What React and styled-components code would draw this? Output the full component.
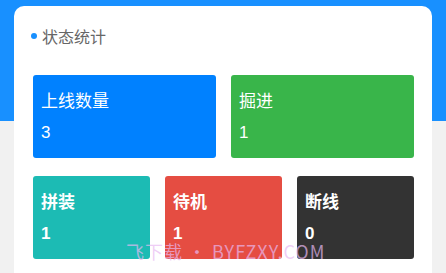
import React from "react"
import styled, { createGlobalStyle } from "styled-components"

const GlobalStyle = createGlobalStyle`
  body {
    margin: 0;
    background: #f1f1f1;
    font-family: "Microsoft YaHei", "Noto Sans CJK SC", "Liberation Sans", sans-serif;
  }
`
const Page = styled.div`
  position: relative;
  height: 273px;
  overflow: hidden;
  padding-top: 6px;
  box-sizing: border-box;
  background: linear-gradient(#1890ff 0, #1890ff 121px, #f1f1f1 121px);
`
const Panel = styled.div`
  margin: 0 14px;
  background: #fff;
  border-radius: 10px 10px 0 0;
  padding: 18px 18px 30px 19px;
  min-height: 300px;
`
const Title = styled.div`
  display: flex;
  align-items: center;
  gap: 5px;
  height: 24px;
  font-size: 16px;
  color: #666;
`
const Dot = styled.span`
  width: 6px;
  height: 6px;
  border-radius: 50%;
  background: #1890ff;
  margin-left: -2px;
`
const Grid = styled.div`
  display: grid;
  grid-template-columns: repeat(${props => props.cols}, 1fr);
  gap: 15px;
  margin-top: ${props => props.top}px;
`
const Stat = styled.div`
  height: 83px;
  border-radius: 3px;
  background: ${props => props.color};
  color: #fff;
  padding: 16px 8px 0;
  box-sizing: border-box;
  font-weight: ${props => (props.bold ? 600 : 400)};
`
const Label = styled.div`
  font-size: 17px;
  line-height: 18px;
`
const Value = styled.div`
  font-size: 17px;
  line-height: 14px;
  margin-top: 17px;
  font-family: "Liberation Sans", sans-serif;
`
const Watermark = styled.div`
  position: absolute;
  left: 126px;
  top: 244px;
  font-size: 18px;
  line-height: 15px;
  color: rgba(232, 185, 242, 0.7);
  letter-spacing: 1px;
  white-space: pre;
  pointer-events: none;
`

const top = [
  { label: "上线数量", value: 3, color: "#0081ff" },
  { label: "掘进", value: 1, color: "#39b54a" },
]
const bottom = [
  { label: "拼装", value: 1, color: "#1cbbb4" },
  { label: "待机", value: 1, color: "#e54d42" },
  { label: "断线", value: 0, color: "#333333" },
]

const App = () => {
  return (
    <Page>
      <GlobalStyle />
      <Panel>
        <Title>
          <Dot />
          状态统计
        </Title>
        <Grid cols={2} top={27}>
          {top.map(s => (
            <Stat key={s.label} color={s.color}>
              <Label>{s.label}</Label>
              <Value>{s.value}</Value>
            </Stat>
          ))}
        </Grid>
        <Grid cols={3} top={18}>
          {bottom.map(s => (
            <Stat key={s.label} color={s.color} bold>
              <Label>{s.label}</Label>
              <Value>{s.value}</Value>
            </Stat>
          ))}
        </Grid>
      </Panel>
      <Watermark>飞下载 • BYFZXY.COM</Watermark>
    </Page>
  )
}

export default App
